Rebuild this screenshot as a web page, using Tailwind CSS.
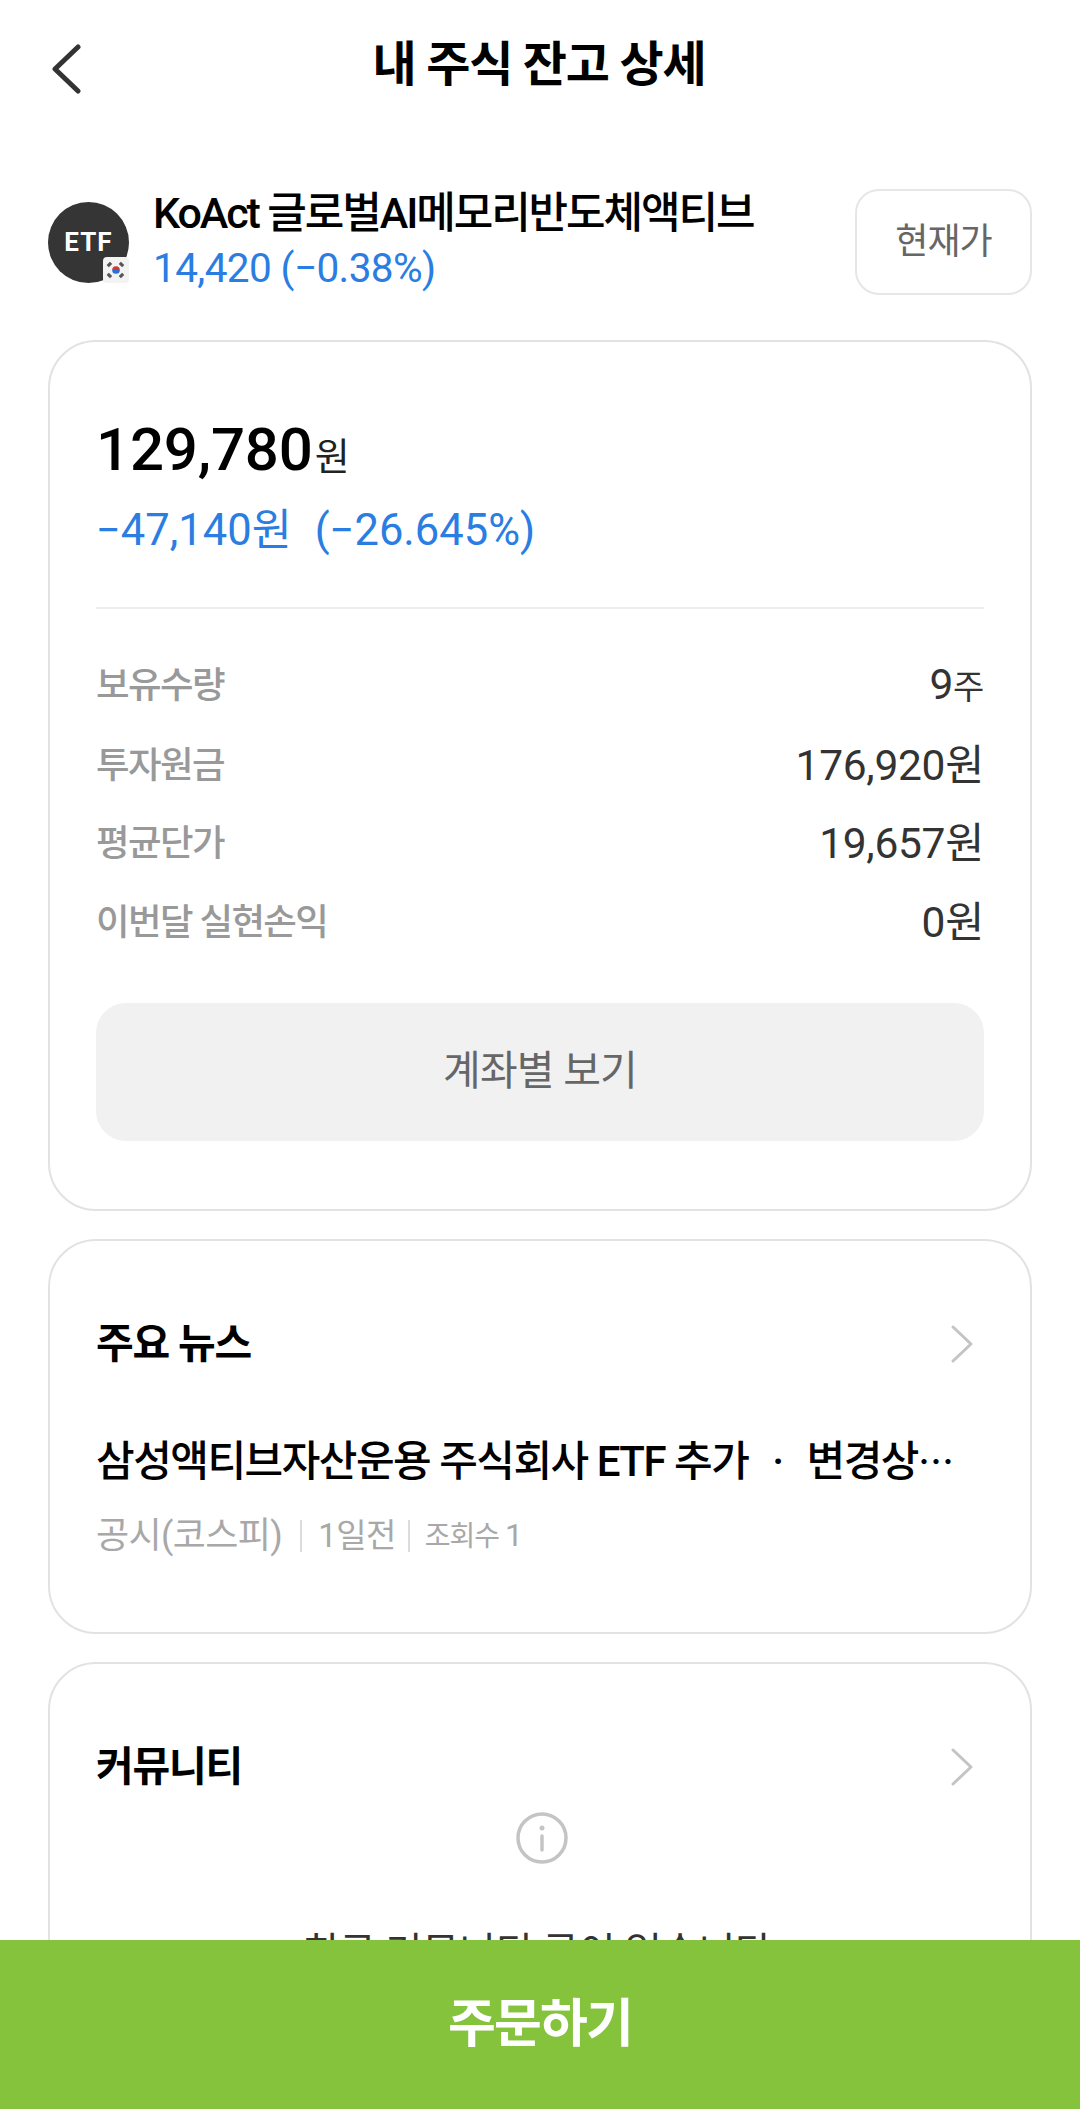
<!DOCTYPE html>
<html lang="ko">
<head>
<meta charset="utf-8">
<script src="https://cdn.jsdelivr.net/npm/@tailwindcss/browser@4"></script>
</head>
<body class="bg-white">
<div class="relative w-[1080px] h-[2109px] overflow-hidden bg-white font-['Roboto','Noto_Sans_CJK_KR',sans-serif] text-black">
  <header class="relative h-[130px] flex items-center justify-center">
    <svg class="absolute left-[50px] top-[44px]" width="32" height="50" viewBox="0 0 32 50" fill="none"><path d="M28 3 L5 25 L28 47" stroke="#333" stroke-width="5" stroke-linecap="round" stroke-linejoin="round"/></svg>
    <h1 class="text-[48px] leading-[60px] font-bold tracking-[-1.2px] mr-[2px]">내 주식 잔고 상세</h1>
  </header>

  <section class="h-[210px] pl-[48px] pr-[48px] flex items-center">
    <div class="relative w-[81px] h-[81px] rounded-full bg-[#353535] flex items-center justify-center shrink-0 mt-[14px]">
      <span class="text-white text-[26px] font-bold tracking-[1px]">ETF</span>
      <div class="absolute right-0 bottom-0 w-[26px] h-[26px] rounded-[4px] bg-[#f3f3f3] flex items-center justify-center">
        <svg width="22" height="22" viewBox="0 0 20 20"><path d="M6.5 10a3.5 3.5 0 0 1 7 0z" fill="#d8352f"/><path d="M6.5 10a3.5 3.5 0 0 0 7 0z" fill="#2c6fd6"/><g stroke="#555" stroke-width="1.4"><path d="M2 6l3-3M3 7l3-3M14 3l3 3M13 4l3 3M2 14l3 3M3 13l3 3M14 17l3-3M13 16l3-3"/></g></svg>
      </div>
    </div>
    <div class="ml-[24px] flex-1 flex flex-col mt-[8px]">
      <div class="text-[43px] leading-[56px] font-medium tracking-[-2.1px]">KoAct 글로벌AI메모리반도체액티브</div>
      <div class="text-[40.5px] leading-[50px] text-[#2a7de1] tracking-[-0.6px] mt-[2px]">14,420 (−0.38%)</div>
    </div>
    <div class="w-[177px] h-[106px] mt-[14px] rounded-[24px] border-2 border-[#e6e6e6] flex items-center justify-center text-[36px] text-[#666] tracking-[-1px]">현재가</div>
  </section>

  <div class="px-[48px] flex flex-col gap-[28px]">
    <section class="h-[871px] rounded-[48px] border-2 border-[#e2e2e2] px-[46px] pt-[72px]">
      <div class="flex items-baseline">
        <span class="text-[60px] leading-[72px] font-medium tracking-[-0.2px]">129,780</span><span class="text-[38px] text-[#222] ml-[2px]">원</span>
      </div>
      <div class="text-[43.5px] leading-[56px] text-[#2a7de1] mt-[17px]">−47,140원<span class="ml-[23px]">(−26.645%)</span></div>
      <div class="h-[2px] bg-[#ededed] mt-[48px]"></div>
      <dl class="mt-[51px] flex flex-col gap-[28.5px] text-[36.5px] leading-[50px]">
        <div class="flex justify-between items-center"><dt class="text-[#999] font-medium tracking-[-1.6px]">보유수량</dt><dd class="text-[#333] text-[42.5px] tracking-[-0.3px]">9<span class="text-[34px]">주</span></dd></div>
        <div class="flex justify-between items-center"><dt class="text-[#999] font-medium tracking-[-1.6px]">투자원금</dt><dd class="text-[#333] text-[42.5px] tracking-[-0.3px]">176,920원</dd></div>
        <div class="flex justify-between items-center"><dt class="text-[#999] font-medium tracking-[-1.6px]">평균단가</dt><dd class="text-[#333] text-[42.5px] tracking-[-0.3px]">19,657원</dd></div>
        <div class="flex justify-between items-center"><dt class="text-[#999] font-medium tracking-[-1.6px]">이번달 실현손익</dt><dd class="text-[#333] text-[42.5px] tracking-[-0.3px]">0원</dd></div>
      </dl>
      <div class="mt-[55px] h-[138px] rounded-[30px] bg-[#f1f1f1] flex items-center justify-center text-[41px] text-[#666] tracking-[-0.8px]">계좌별 보기</div>
    </section>

    <section class="h-[395px] rounded-[48px] border-2 border-[#e2e2e2] px-[46px] pt-[75px] relative">
      <div class="text-[41px] leading-[56px] font-bold tracking-[-1.2px]">주요 뉴스</div>
      <svg class="absolute right-[56px] top-[83px]" width="24" height="40" viewBox="0 0 24 40" fill="none"><path d="M3 3 L21 20 L3 37" stroke="#c4c4c4" stroke-width="3" stroke-linecap="round" stroke-linejoin="round"/></svg>
      <div class="text-[42px] leading-[56px] font-medium tracking-[-1.5px] mt-[60px] whitespace-nowrap">삼성액티브자산운용 주식회사 ETF 추가<span class="mx-[15px]">&nbsp;·&nbsp;</span>변경상<span class="font-['Noto_Sans_CJK_KR'] text-[36px] tracking-[-3px]">⋯</span></div>
      <div class="mt-[22px] flex items-center leading-[46px] text-[#a8a8a8] tracking-[-0.6px]">
        <span class="text-[36px]">공시(코스피)</span><span class="w-[2px] h-[32px] bg-[#dcdcdc] ml-[18px] mr-[16px]"></span><span class="text-[33px]">1일전</span><span class="w-[2px] h-[32px] bg-[#dcdcdc] ml-[12px] mr-[15px]"></span><span class="text-[28px] tracking-[-1px]">조회수 <span class="text-[32px]">1</span></span>
      </div>
    </section>

    <section class="h-[500px] rounded-[48px] border-2 border-[#e2e2e2] px-[46px] pt-[75px] relative">
      <div class="text-[41px] leading-[56px] font-bold tracking-[-1.2px]">커뮤니티</div>
      <svg class="absolute right-[56px] top-[83px]" width="24" height="40" viewBox="0 0 24 40" fill="none"><path d="M3 3 L21 20 L3 37" stroke="#c4c4c4" stroke-width="3" stroke-linecap="round" stroke-linejoin="round"/></svg>
      <div class="flex flex-col items-center mt-[17px]">
        <svg class="ml-[4px]" width="52" height="52" viewBox="0 0 52 52" fill="none"><circle cx="26" cy="26" r="24" stroke="#c4c4c4" stroke-width="3.5"/><circle cx="26" cy="16" r="2.5" fill="#c4c4c4"/><path d="M26 24V38" stroke="#c4c4c4" stroke-width="3.5" stroke-linecap="round"/></svg>
        <div class="mt-[64px] mr-[6px] text-[40.5px] leading-[50px] text-[#333] tracking-[-0.5px]">최근 커뮤니티 글이 없습니다</div>
      </div>
    </section>
  </div>

  <button class="absolute left-0 bottom-0 w-[1080px] h-[169px] bg-[#85c33d] text-white text-[52px] font-bold tracking-[-1.8px] flex items-center justify-center">주문하기</button>
</div>
</body>
</html>
